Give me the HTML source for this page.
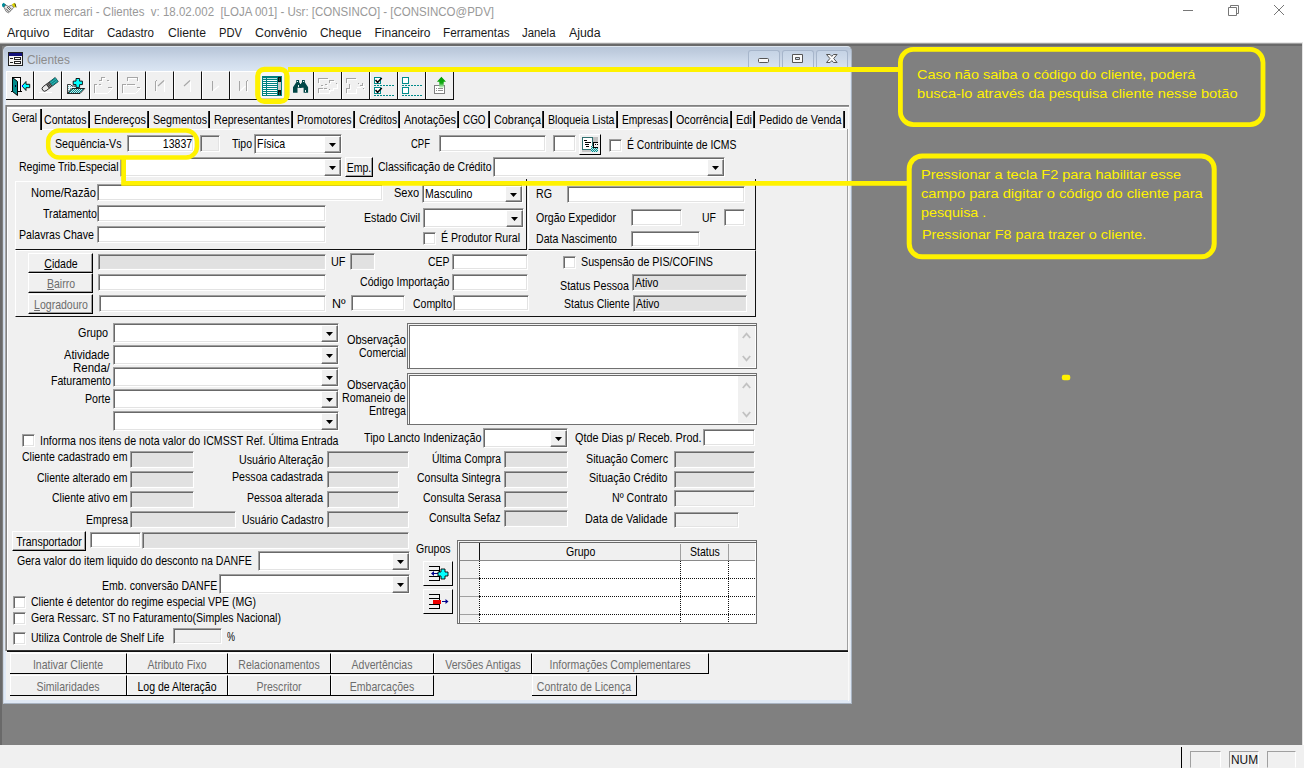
<!DOCTYPE html>
<html lang="pt-BR"><head><meta charset="utf-8"><title>acrux mercari - Clientes</title>
<style>
*{box-sizing:border-box;margin:0;padding:0}
html,body{width:1304px;height:771px;overflow:hidden;background:#fff}
body{position:relative;font:13px "Liberation Sans",sans-serif;color:#000}
div,span,i,b,svg{position:absolute}
u{text-decoration:underline}
.t{font:13px/15px "Liberation Sans",sans-serif;white-space:pre;transform:scaleX(.81);transform-origin:0 0;color:#000}
.t.g{color:#6d6d6d}
.ui{font:12px/16px "Liberation Sans",sans-serif;white-space:pre;transform-origin:0 0}
.in{background:#fff;border:1px solid;border-color:#a0a0a0 #fff #fff #a0a0a0;box-shadow:inset 1px 1px 0 #696969,inset -1px -1px 0 #e3e3e3}
.in.g{background:#e1e1e1}
.in.f{background:#f0f0f0}
.ck{background:#fff;border:1px solid;border-color:#a0a0a0 #fff #fff #a0a0a0;box-shadow:inset 1px 1px 0 #696969,inset -1px -1px 0 #e3e3e3}
.cb{right:0;top:1px;bottom:0;width:17px;background:#f0f0f0;border:1px solid;border-color:#fff #696969 #696969 #fff;box-shadow:inset -1px -1px 0 #a0a0a0}
.cb b{left:4px;top:6px;width:7px;height:4px;background:#000;clip-path:polygon(0 0,100% 0,50% 100%)}
.bt{background:#f0f0f0;border:1px solid;border-color:#fff #000 #000 #fff;box-shadow:inset -1px -1px 0 #a0a0a0;text-align:center;font:13px "Liberation Sans",sans-serif;white-space:pre;overflow:hidden}
.bt .bl{left:50%;top:1px;transform:translateX(-50%) scaleX(.81);transform-origin:50% 50%}
.bt.d{color:#6d6d6d}
.ln{background:#000}
.tb{width:28px;height:29px;border:1px solid;border-color:#fff #111 #111 #fff;background:#f0f0f0}
.in.ta{border:1px solid #707070;box-shadow:inset 1px 1px 0 #f4f4f4,inset 2px 2px 0 #696969,inset -1px -1px 0 #fff}
.bt.nb{border-left:0;box-shadow:inset 1px 0 0 #fff}
.c{font:13.5px/16px "Liberation Sans",sans-serif;white-space:pre;color:#fff200;transform-origin:0 0}
.bt.nb2{box-shadow:none}

</style></head>
<body>
<div id="titlebar" style="left:0;top:0;width:1304px;height:22px;background:#fff"></div>
<svg style="left:0;top:0" width="20" height="16" viewBox="0 0 20 16">
<path d="M2 4.2 L3.6 2.8 L5.8 4.6 L4 7.6 L2.2 6.6 Z" fill="#008b9a"/>
<path d="M16 4.6 L14.2 2.8 L11.8 4.4 L13.6 7.4 L15.8 7.2 Z" fill="#d8d000"/>
<path d="M14.8 3.4 L16.2 7.4" stroke="#222" stroke-width=".8"/>
<path d="M4 7.2 L5.6 5 L8.4 6.4 L11.6 5.2 L13.6 7.4 L11 10.6 L8.4 12.8 L6 11.4 Z" fill="#e6e6e6" stroke="#555" stroke-width=".7"/>
<path d="M7 7 L10.4 10.4 M8.6 6.4 L11.6 9.4 M6 8.6 L9 11.8 M5.2 5.2 L5.8 4.6" stroke="#333" stroke-width=".8" fill="none"/>
</svg>
<span class="ui" style="left:23px;top:4px;color:#999;transform:scaleX(.958)">acrux mercari - Clientes  v: 18.02.002  [LOJA 001] - Usr: [CONSINCO] - [CONSINCO@PDV]</span>
<svg style="left:1170px;top:0" width="134" height="22" viewBox="0 0 134 22">
<g stroke="#777" stroke-width="1" fill="none">
<path d="M13 10.5 H23"/>
<path d="M58.5 7.5 h8 v8 h-8 z M60.5 7.5 v-2 h8 v8 h-2"/>
<path d="M104 5 L114 15 M114 5 L104 15"/>
</g></svg>
<span class="ui" style="left:6.5px;top:25px;color:#1a1a1a;transform:scaleX(1.044)">Arquivo</span>
<span class="ui" style="left:63.0px;top:25px;color:#1a1a1a;transform:scaleX(0.987)">Editar</span>
<span class="ui" style="left:107.0px;top:25px;color:#1a1a1a;transform:scaleX(0.965)">Cadastro</span>
<span class="ui" style="left:168.0px;top:25px;color:#1a1a1a;transform:scaleX(1.016)">Cliente</span>
<span class="ui" style="left:218.5px;top:25px;color:#1a1a1a;transform:scaleX(0.931)">PDV</span>
<span class="ui" style="left:254.5px;top:25px;color:#1a1a1a;transform:scaleX(1.026)">Convênio</span>
<span class="ui" style="left:320.0px;top:25px;color:#1a1a1a;transform:scaleX(0.988)">Cheque</span>
<span class="ui" style="left:374.5px;top:25px;color:#1a1a1a;transform:scaleX(1.0)">Financeiro</span>
<span class="ui" style="left:443.0px;top:25px;color:#1a1a1a;transform:scaleX(0.978)">Ferramentas</span>
<span class="ui" style="left:522.0px;top:25px;color:#1a1a1a;transform:scaleX(0.946)">Janela</span>
<span class="ui" style="left:568.5px;top:25px;color:#1a1a1a;transform:scaleX(1.026)">Ajuda</span>
<div id="mdi" style="left:0;top:42px;width:1303px;height:703px;background:#808080;border-top:1px solid #e8e8e8"></div>
<div style="left:0;top:43px;width:1302px;height:1px;background:#a0a0a0"></div>
<div style="left:0;top:44px;width:1302px;height:2px;background:#696969"></div>
<div style="left:0;top:44px;width:2px;height:701px;background:#696969"></div>
<div style="left:1302px;top:43px;width:1px;height:702px;background:#e3e3e3"></div>
<div id="status" style="left:0;top:745px;width:1304px;height:23px;background:#f0f0f0"></div>
<div style="left:1181px;top:747px;width:1px;height:21px;background:#000"></div>
<div style="left:1190px;top:751px;width:31px;height:17px;border:1px solid;border-color:#a0a0a0 #fff #f0f0f0 #a0a0a0"></div>
<div style="left:1229px;top:751px;width:30px;height:17px;border:1px solid;border-color:#a0a0a0 #fff #f0f0f0 #a0a0a0"></div>
<div style="left:1267px;top:751px;width:29px;height:17px;border:1px solid;border-color:#a0a0a0 #fff #f0f0f0 #a0a0a0"></div>
<span class="ui" style="left:1230.5px;top:752px;font-size:12.5px;color:#111;transform:scaleX(.95)">NUM</span>
<div id="child" style="left:3px;top:46px;width:849px;height:658px;border-radius:5px 5px 0 0;background:linear-gradient(#b8c6d9 0,#bfccde 5px,#cdd9e9 13px,#d8e3f1 22px,#dde7f3 26px,#e0e9f5 100%);border:1px solid #ccd6e3;border-color:#dde5ee #a9b4c2 #a9b4c2 #ccd6e3"></div>
<div id="content" style="left:6px;top:71px;width:844px;height:629px;background:#f0f0f0"></div>
<svg style="left:8px;top:52px" width="15" height="14" viewBox="0 0 15 14">
<rect x="0" y="0" width="15" height="14" fill="#222"/><rect x="1" y="1" width="13" height="12" fill="#f4f4f4"/>
<rect x="1" y="1" width="13" height="3" fill="#10107a"/>
<rect x="2" y="6" width="3" height="1" fill="#222"/><rect x="2" y="10" width="3" height="1" fill="#222"/>
<rect x="6.5" y="5.5" width="6" height="2" fill="#fff" stroke="#222"/><rect x="6.5" y="9.5" width="6" height="2" fill="#fff" stroke="#222"/>
</svg>
<span class="ui" style="left:27px;top:52px;font-size:12.5px;color:#8c8c8c;transform:scaleX(.95)">Clientes</span>
<div style="left:748px;top:50px;width:32px;height:20px;border:1px solid #a7b6cb;border-bottom:0;border-radius:3px 3px 0 0;background:linear-gradient(#c5d3e5,#dbe5f2)"></div>
<div style="left:782px;top:50px;width:32px;height:20px;border:1px solid #a7b6cb;border-bottom:0;border-radius:3px 3px 0 0;background:linear-gradient(#c5d3e5,#dbe5f2)"></div>
<div style="left:816px;top:50px;width:32px;height:20px;border:1px solid #a7b6cb;border-bottom:0;border-radius:3px 3px 0 0;background:linear-gradient(#c5d3e5,#dbe5f2)"></div>
<svg style="left:748px;top:50px" width="100" height="20" viewBox="0 0 100 20">
<g fill="#fafafa" stroke="#555" stroke-width="1">
<rect x="10.5" y="8.5" width="10" height="4" rx="1"/>
<path d="M44.5 4.5 h10 v8 h-10 z M47.5 7.5 v2 h4 v-2 z" fill-rule="evenodd"/>
<path d="M78.5 4.5 h3.6 l1.7 1.9 l1.7 -1.9 h3.6 l-3.4 4 l3.4 4 h-3.6 l-1.7 -1.9 l-1.7 1.9 h-3.6 l3.4 -4 z"/>
</g></svg>
<div class="tb" style="left:6px;top:71px"></div>
<div class="tb" style="left:34px;top:71px"></div>
<div class="tb" style="left:62px;top:71px"></div>
<div class="tb" style="left:90px;top:71px"></div>
<div class="tb" style="left:118px;top:71px"></div>
<div class="tb" style="left:146px;top:71px"></div>
<div class="tb" style="left:174px;top:71px"></div>
<div class="tb" style="left:202px;top:71px"></div>
<div class="tb" style="left:230px;top:71px"></div>
<div class="tb" style="left:258px;top:71px"></div>
<div class="tb" style="left:286px;top:71px"></div>
<div class="tb" style="left:314px;top:71px"></div>
<div class="tb" style="left:342px;top:71px"></div>
<div class="tb" style="left:370px;top:71px"></div>
<div class="tb" style="left:398px;top:71px"></div>
<div class="tb" style="left:426px;top:71px"></div>
<div style="left:6px;top:99px;width:448px;height:1px;background:#111"></div>
<div style="left:260px;top:72px;width:25px;height:27px;background:#f7f7fb;box-shadow:inset -1px -1px 0 #c9c9d6"></div>
<svg id="tbicons" style="left:0;top:66px" width="460" height="40" viewBox="0 66 460 40" shape-rendering="crispEdges">
<rect x="12.5" y="77.5" width="8" height="14" fill="#fff" stroke="#000"/>
<path d="M10.5 91.5H22" stroke="#000" fill="none"/>
<path d="M12.5 77.5 L17.5 81.5 V95.5 L12.5 91.5 Z" fill="#008b8b" stroke="#000" shape-rendering="geometricPrecision"/>
<rect x="15" y="85" width="1" height="1.5" fill="#003"/>
<path d="M22 86 L26 81.5 V84.3 H29.7 V87.7 H26 V90.5 Z" fill="#00ffff" stroke="#000" stroke-width=".9" shape-rendering="geometricPrecision"/>
<rect x="21.5" y="85.2" width="1.3" height="1.6" fill="#0000ff"/>
<g shape-rendering="geometricPrecision" transform="rotate(-37 49.5 85)"><path d="M43.4 82.5 H58.5 V87.5 H43.4 A2.5 2.5 0 0 1 43.4 82.5 Z" fill="#e8e8e8" stroke="#111" stroke-width=".8"/><rect x="47" y="82.5" width="4.5" height="5" fill="#333"/><path d="M48.5 82.5v5M50 82.5v5" stroke="#bbb" stroke-width=".5"/><rect x="51.5" y="82.5" width="7" height="5" fill="#008b8b"/><path d="M52 84h6.5M52 86h6.5" stroke="#7fd0d0" stroke-width=".5"/></g>
<path d="M39 92.5H52" stroke="#fff"/>
<defs><pattern id="dz" width="2" height="2" patternUnits="userSpaceOnUse"><rect width="2" height="2" fill="#008b8b"/><rect width="1" height="1" fill="#cfeaea"/><rect x="1" y="1" width="1" height="1" fill="#cfeaea"/></pattern><pattern id="dl" width="2" height="2" patternUnits="userSpaceOnUse"><rect width="2" height="2" fill="#eef8f8"/><rect width="1" height="1" fill="#6fbcbc"/></pattern></defs>
<path d="M67.5 93.5 V84.5 H70.5 L72 86 H77 V88.5 H72 Z" fill="url(#dl)" stroke="#111" stroke-width=".8" shape-rendering="geometricPrecision"/>
<path d="M67.5 93.5 L72 88.5 H84.7 L80 93.5 Z" fill="url(#dz)" stroke="#111" stroke-width=".9" shape-rendering="geometricPrecision"/>
<path d="M76 78.5 h3.6 v2.6 h2.8 v3.5 h-2.8 v2.8 h-3.6 v-2.8 h-2.8 v-3.5 h2.8 z" fill="#00ffff" stroke="#000" stroke-width=".9" shape-rendering="geometricPrecision"/>
<path d="M94.5 92.5 V84.5 H97 M98.5 80.5 H101.5 V77.5 H105 M106.5 80.5 H108.5 M99 84.5 H101 M108 87.5 H112" transform="translate(1 1)" stroke="#fff" fill="none"/>
<path d="M94.5 92.5 V84.5 H97 M98.5 80.5 H101.5 V77.5 H105 M106.5 80.5 H108.5 M99 84.5 H101 M108 87.5 H112" stroke="#a6a6a6" fill="none"/>
<path d="M95 93.5 H107.5 L112.5 88.5" stroke="#fff" fill="none" shape-rendering="geometricPrecision"/>
<path d="M122.5 92.5 V84.5 H125.5 M127.5 80.5 V77.5 H137.5 V80.5 M127 84.5 H135 M136.5 87.5 H140" transform="translate(1 1)" stroke="#fff" fill="none"/>
<path d="M122.5 92.5 V84.5 H125.5 M127.5 80.5 V77.5 H137.5 V80.5 M127 84.5 H135 M136.5 87.5 H140" stroke="#a6a6a6" fill="none"/>
<path d="M123 93.5 H135.5 L140.5 88.5" stroke="#fff" fill="none" shape-rendering="geometricPrecision"/>
<path d="M164.5 80.5 V91.5" stroke="#fff" fill="none"/>
<path d="M155.5 80.5 V90.5 M155.5 80.5 H157" stroke="#a6a6a6" fill="none"/>
<path d="M164 80.5 L158 86" stroke="#a6a6a6" stroke-width="1.1" fill="none" shape-rendering="geometricPrecision"/>
<path d="M156.5 81.5 V91.5" stroke="#fff" fill="none" opacity=".7"/>
<path d="M190.5 80.5 V91.5" stroke="#fff" fill="none"/>
<path d="M190 80.5 L184 86" stroke="#a6a6a6" stroke-width="1.1" fill="none" shape-rendering="geometricPrecision"/>
<path d="M212.5 80.5 V90.5" stroke="#a6a6a6" fill="none"/>
<path d="M213 91 L219 86" stroke="#fff" stroke-width="1.2" fill="none" shape-rendering="geometricPrecision"/>
<path d="M239.5 80.5 V90.5 M246.5 80.5 V90.5 M246.5 80.5 H248" stroke="#a6a6a6" fill="none"/>
<path d="M240 91 L245.5 86" stroke="#fff" stroke-width="1.2" fill="none" shape-rendering="geometricPrecision"/>
<path d="M247.5 81.5 V91.5" stroke="#fff" fill="none"/>
<rect x="262" y="76" width="20" height="20" fill="#008080"/>
<rect x="263.4" y="77.6" width="2.6" height="1" fill="#bfe0e0"/><rect x="267.2" y="77.6" width="9.6" height="1" fill="#bfe0e0"/>
<rect x="263.4" y="80" width="2.6" height="1" fill="#fff"/><rect x="267.2" y="80" width="9.6" height="1" fill="#fff"/>
<rect x="263.4" y="82" width="2.6" height="1" fill="#fff"/><rect x="267.2" y="82" width="9.6" height="1" fill="#fff"/>
<rect x="263.4" y="84" width="2.6" height="1" fill="#fff"/><rect x="267.2" y="84" width="9.6" height="1" fill="#fff"/>
<rect x="263.4" y="86" width="2.6" height="1" fill="#fff"/><rect x="267.2" y="86" width="9.6" height="1" fill="#fff"/>
<rect x="263.4" y="88" width="2.6" height="1" fill="#fff"/><rect x="267.2" y="88" width="9.6" height="1" fill="#fff"/>
<rect x="263.4" y="90" width="2.6" height="1" fill="#fff"/><rect x="267.2" y="90" width="9.6" height="1" fill="#fff"/>
<rect x="263.4" y="92" width="2.6" height="1" fill="#fff"/><rect x="267.2" y="92" width="9.6" height="1" fill="#fff"/>
<rect x="263.4" y="94" width="2.6" height="1" fill="#fff"/><rect x="267.2" y="94" width="9.6" height="1" fill="#fff"/>
<rect x="278" y="77" width="3" height="18" fill="#101010"/>
<rect x="278" y="82" width="3" height="8" fill="#c8c4c4"/>
<path d="M279.5 77.5v3M279.5 91.5v3" stroke="#008080" stroke-width=".6"/>
<g fill="#004646" shape-rendering="geometricPrecision"><path d="M296.3 80 h2.8 v2.3 l1 1.2 v4.3 h-2.6 v5 h-4.5 v-5.5 l3.3 -5 z"/><path d="M302 80 h2.8 v2.3 l3.3 5 v5.5 h-4.5 v-5 h-2.6 v-4.3 l1 -1.2 z"/><rect x="299.5" y="84" width="2" height="4"/></g>
<g fill="#e8f0f0"><rect x="297.2" y="80.8" width="1" height="1"/><rect x="303" y="80.8" width="1" height="1"/><rect x="294.5" y="86" width=".8" height="2"/><rect x="294.5" y="90" width=".8" height="1.6"/><rect x="298" y="84.5" width=".7" height="2"/><rect x="302.5" y="84.5" width=".7" height="2"/><rect x="304.7" y="90" width=".8" height="1.6"/></g>
<path d="M318.5 82.5 V78.5 H328 M318.5 92.5 V88.5 H322.5 M329.5 83 V80.5 H334 M335.5 83.5 H337 M321 85.5 H323 M324.5 84.5 H326.5 M324 88.5 H326.5 M329.5 89 V91" transform="translate(1 1)" stroke="#fff" fill="none"/>
<path d="M318.5 82.5 V78.5 H328 M318.5 92.5 V88.5 H322.5 M329.5 83 V80.5 H334 M335.5 83.5 H337 M321 85.5 H323 M324.5 84.5 H326.5 M324 88.5 H326.5 M329.5 89 V91" stroke="#a6a6a6" fill="none"/>
<path d="M319.5 93.5 H329 V90.5 H333.5 V88 H337.5 V84.5" stroke="#fff" fill="none"/>
<path d="M346.5 82.5 V78.5 H356 M349.5 84 V88.5 H346.5 V92.5 M359.5 85.5 H363 M362.5 83 V86.5 M357.5 83.5 H358.5 M362.5 88 H363.5" transform="translate(1 1)" stroke="#fff" fill="none"/>
<path d="M346.5 82.5 V78.5 H356 M349.5 84 V88.5 H346.5 V92.5 M359.5 85.5 H363 M362.5 83 V86.5 M357.5 83.5 H358.5 M362.5 88 H363.5" stroke="#a6a6a6" fill="none"/>
<path d="M347.5 93.5 H356.5 V88.5 M357 88 L365 86" stroke="#fff" fill="none"/>
<rect x="374.5" y="77.5" width="6" height="6" fill="#fff" stroke="#008b8b" stroke-width="1.2"/>
<path d="M375.5 80.1 L377.6 82.3 L381.8 77.9" stroke="#000" stroke-width="1.5" fill="none" shape-rendering="geometricPrecision"/>
<path d="M374 85.5 H394" stroke="#008b8b" stroke-dasharray="2 1" fill="none"/>
<rect x="374.5" y="87.5" width="6" height="6" fill="#fff" stroke="#008b8b" stroke-width="1.2"/>
<path d="M375.5 90.1 L377.6 92.3 L381.8 87.9" stroke="#000" stroke-width="1.5" fill="none" shape-rendering="geometricPrecision"/>
<path d="M374 95.5 H394" stroke="#008b8b" stroke-dasharray="2 1" fill="none"/>
<rect x="402.7" y="77.5" width="6" height="6" fill="#fff" stroke="#008b8b" stroke-width="1.2"/>
<path d="M402.2 85.5 H422.2" stroke="#008b8b" stroke-dasharray="2 1" fill="none"/>
<rect x="402.7" y="87.5" width="6" height="6" fill="#fff" stroke="#008b8b" stroke-width="1.2"/>
<path d="M402.2 95.5 H422.2" stroke="#008b8b" stroke-dasharray="2 1" fill="none"/>
<defs><linearGradient id="ga" x1="0" y1="0" x2="0" y2="1"><stop offset="0" stop-color="#00a000"/><stop offset=".55" stop-color="#10a810"/><stop offset="1" stop-color="#e8ffe8"/></linearGradient></defs>
<rect x="434.5" y="85.5" width="10.3" height="8" fill="#fff" stroke="#808080"/>
<path d="M436 88.5h1M436 90.5h1M438 88.5h5M438 90.5h5" stroke="#909090"/>
<path d="M441.4 76.8 L446 81.8 H443.7 V88 H439.3 V81.8 H436.9 Z" fill="url(#ga)" shape-rendering="geometricPrecision"/>
</svg>
<div style="left:6px;top:105px;width:843px;height:2px;background:linear-gradient(#808080 50%,#999 50%)"></div>
<div style="left:7px;top:107px;width:841px;height:1px;background:#fff"></div>
<div style="left:5px;top:129px;width:843px;height:1px;background:#fff"></div>
<div style="left:5px;top:105px;width:2px;height:546px;background:linear-gradient(90deg,#a8a8a8 50%,#808080 50%)"></div>
<div style="left:7px;top:109px;width:1px;height:542px;background:#fff"></div>
<div style="left:847px;top:129px;width:1px;height:522px;background:#a0a0a0"></div>
<div style="left:848px;top:107px;width:1px;height:594px;background:#fafafa"></div>
<div style="left:8px;top:108px;width:32px;height:23px;background:#f0f0f0;border-top:1px solid #fff"></div>
<div style="left:40px;top:109px;width:2px;height:21px;background:linear-gradient(90deg,#333 50%,#000 50%)"></div>
<span class="t" style="top:110px;left:11.5px;transform:scaleX(0.7862);">Geral</span>
<span class="t" style="top:112px;left:44.0px;transform:scaleX(0.8166);">Contatos</span>
<div style="left:88px;top:111px;width:2px;height:17px;background:linear-gradient(90deg,#333 50%,#000 50%)"></div>
<span class="t" style="top:112px;left:93.5px;transform:scaleX(0.8366);">Endereços</span>
<div style="left:147px;top:111px;width:2px;height:17px;background:linear-gradient(90deg,#333 50%,#000 50%)"></div>
<span class="t" style="top:112px;left:152.5px;transform:scaleX(0.8211);">Segmentos</span>
<div style="left:208px;top:111px;width:2px;height:17px;background:linear-gradient(90deg,#333 50%,#000 50%)"></div>
<span class="t" style="top:112px;left:214.0px;transform:scaleX(0.8226);">Representantes</span>
<div style="left:291px;top:111px;width:2px;height:17px;background:linear-gradient(90deg,#333 50%,#000 50%)"></div>
<span class="t" style="top:112px;left:296.5px;transform:scaleX(0.811);">Promotores</span>
<div style="left:352.5px;top:111px;width:2px;height:17px;background:linear-gradient(90deg,#333 50%,#000 50%)"></div>
<span class="t" style="top:112px;left:358.5px;transform:scaleX(0.7848);">Créditos</span>
<div style="left:398px;top:111px;width:2px;height:17px;background:linear-gradient(90deg,#333 50%,#000 50%)"></div>
<span class="t" style="top:112px;left:403.5px;transform:scaleX(0.8464);">Anotações</span>
<div style="left:457px;top:111px;width:2px;height:17px;background:linear-gradient(90deg,#333 50%,#000 50%)"></div>
<span class="t" style="top:112px;left:463.0px;transform:scaleX(0.7595);">CGO</span>
<div style="left:488px;top:111px;width:2px;height:17px;background:linear-gradient(90deg,#333 50%,#000 50%)"></div>
<span class="t" style="top:112px;left:493.5px;transform:scaleX(0.8337);">Cobrança</span>
<div style="left:541.5px;top:111px;width:2px;height:17px;background:linear-gradient(90deg,#333 50%,#000 50%)"></div>
<span class="t" style="top:112px;left:547.5px;transform:scaleX(0.8142);">Bloqueia Lista</span>
<div style="left:616px;top:111px;width:2px;height:17px;background:linear-gradient(90deg,#333 50%,#000 50%)"></div>
<span class="t" style="top:112px;left:622.0px;transform:scaleX(0.7859);">Empresas</span>
<div style="left:669.5px;top:111px;width:2px;height:17px;background:linear-gradient(90deg,#333 50%,#000 50%)"></div>
<span class="t" style="top:112px;left:675.5px;transform:scaleX(0.8258);">Ocorrência</span>
<div style="left:729.5px;top:111px;width:2px;height:17px;background:linear-gradient(90deg,#333 50%,#000 50%)"></div>
<span class="t" style="top:112px;left:735.5px;transform:scaleX(0.8512);">Edi</span>
<div style="left:752.5px;top:111px;width:2px;height:17px;background:linear-gradient(90deg,#333 50%,#000 50%)"></div>
<span class="t" style="top:112px;left:758.5px;transform:scaleX(0.8329);">Pedido de Venda</span>
<div style="left:842.5px;top:111px;width:2px;height:17px;background:linear-gradient(90deg,#333 50%,#000 50%)"></div>
<span class="t" style="top:136px;left:55.0px;transform:scaleX(0.8215);">Sequência-Vs</span>
<div class="in" style="left:127px;top:135px;width:67px;height:17px;"><span class="t" style="right:1px;top:0px;transform-origin:100% 0">13837</span></div>
<div class="in f" style="left:200px;top:135px;width:20px;height:17px;"></div>
<span class="t" style="top:136px;left:231.5px;transform:scaleX(0.806);">Tipo</span>
<div class="in" style="left:254px;top:134px;width:88px;height:20px;"><span class="t" style="left:2px;top:1px">Física</span><i class="cb"><b></b></i></div>
<span class="t" style="top:136px;left:410.5px;transform:scaleX(0.7308);">CPF</span>
<div class="in" style="left:439px;top:135px;width:107px;height:17px;"></div>
<div class="in" style="left:553px;top:135px;width:23px;height:17px;"></div>
<div class="bt nb2" style="left:579px;top:134px;width:22px;height:21px"></div>
<svg style="left:580px;top:135px" width="20" height="19" viewBox="580 135 20 19" shape-rendering="crispEdges">
<defs><pattern id="dz2" width="2" height="2" patternUnits="userSpaceOnUse"><rect width="2" height="2" fill="#008b8b"/><rect width="1" height="1" fill="#bfe6e6"/><rect x="1" y="1" width="1" height="1" fill="#bfe6e6"/></pattern></defs>
<rect x="593" y="137" width="5" height="5" fill="#c0c0c0"/><rect x="582" y="150" width="9" height="2" fill="#c8c8c8"/>
<rect x="582.5" y="137.5" width="10" height="12" fill="#fff" stroke="#2f6f6f" stroke-width="1.2"/>
<path d="M584 140.5h3M585 142.5h6M585 144.5h4M586 146.5h3" stroke="#000" fill="none"/>
<path d="M593 142.5h5M593 147.5h5M593.5 142v6M595 144.5h3" stroke="#000" fill="none"/>
<rect x="596" y="144" width="1" height="1" fill="#f0f0f0"/>
<path d="M590.5 152 V147 L592 145.5 H593 V148 H598 V152 Z" fill="url(#dz2)"/>
</svg>
<div class="ck" style="left:609px;top:139px;width:13px;height:13px;"></div>
<span class="t" style="top:136.5px;left:627.0px;transform:scaleX(0.8017);">É Contribuinte de ICMS</span>
<span class="t" style="top:159px;left:18.5px;transform:scaleX(0.8101);">Regime Trib.Especial</span>
<div class="in" style="left:120px;top:157px;width:222px;height:20px;"><i class="cb"><b></b></i></div>
<div class="bt " style="left:345px;top:157px;width:28px;height:20px;line-height:18px"><span class="bl">Emp.</span></div>
<span class="t" style="top:159px;left:378.0px;transform:scaleX(0.8096);">Classificação de Crédito</span>
<div class="in" style="left:493px;top:157px;width:232px;height:20px;"><i class="cb"><b></b></i></div>
<div style="left:15px;top:181px;width:512px;height:69px;border:1px solid;border-color:#fff #111 #111 #fff"></div>
<div style="left:526px;top:179px;width:1px;height:3px;background:#111"></div>
<div style="left:755px;top:179px;width:1px;height:3px;background:#111"></div>
<div style="left:528px;top:181px;width:228px;height:69px;border:1px solid;border-color:#fff #111 #111 #fff"></div>
<div style="left:15px;top:250px;width:741px;height:67px;border:1px solid;border-color:#fff #111 #111 #fff"></div>
<span class="t" style="top:185px;left:30.5px;transform:scaleX(0.8567);">Nome/Razão</span>
<div class="in" style="left:97px;top:184px;width:286px;height:17px;"></div>
<span class="t" style="top:205.5px;left:42.5px;transform:scaleX(0.8182);">Tratamento</span>
<div class="in" style="left:97px;top:205px;width:229px;height:17px;"></div>
<span class="t" style="top:226.5px;left:18.5px;transform:scaleX(0.8172);">Palavras Chave</span>
<div class="in" style="left:97px;top:226px;width:229px;height:17px;"></div>
<span class="t" style="top:185px;left:393.5px;transform:scaleX(0.8502);">Sexo</span>
<div class="in" style="left:422px;top:184px;width:101px;height:19px;"><span class="t" style="left:2px;top:1px">Masculino</span><i class="cb"><b></b></i></div>
<span class="t" style="top:209.5px;left:363.5px;transform:scaleX(0.8158);">Estado Civil</span>
<div class="in" style="left:423px;top:208px;width:101px;height:20px;"><i class="cb"><b></b></i></div>
<div class="ck" style="left:423px;top:232px;width:13px;height:13px;"></div>
<span class="t" style="top:229.5px;left:441.0px;transform:scaleX(0.8159);">É Produtor Rural</span>
<span class="t" style="top:185.5px;left:535.5px;transform:scaleX(0.8205);">RG</span>
<div class="in" style="left:567px;top:186px;width:178px;height:17px;"></div>
<span class="t" style="top:209.5px;left:535.5px;transform:scaleX(0.814);">Orgão Expedidor</span>
<div class="in" style="left:631px;top:209px;width:51px;height:17px;"></div>
<span class="t" style="top:209.5px;left:702.0px;transform:scaleX(0.8072);">UF</span>
<div class="in" style="left:724px;top:209px;width:21px;height:17px;"></div>
<span class="t" style="top:230.5px;left:535.5px;transform:scaleX(0.8123);">Data Nascimento</span>
<div class="in" style="left:631px;top:231px;width:69px;height:16px;"></div>
<div class="bt " style="left:28px;top:253px;width:65px;height:20px;line-height:18px"><span class="bl"><u>C</u>idade</span></div>
<div class="bt d" style="left:28px;top:273px;width:65px;height:20px;line-height:18px"><span class="bl"><u>B</u>airro</span></div>
<div class="bt d" style="left:28px;top:294px;width:65px;height:20px;line-height:18px"><span class="bl"><u>L</u>ogradouro</span></div>
<div class="in g" style="left:98px;top:254px;width:228px;height:16px;"></div>
<div class="in" style="left:98px;top:274px;width:228px;height:17px;"></div>
<div class="in" style="left:99px;top:295px;width:227px;height:17px;"></div>
<span class="t" style="top:254px;left:331.0px;transform:scaleX(0.836);">UF</span>
<div class="in g" style="left:350px;top:253px;width:25px;height:17px;"></div>
<span class="t" style="top:254px;left:428.0px;transform:scaleX(0.8042);">CEP</span>
<div class="in" style="left:452px;top:254px;width:76px;height:16px;"></div>
<span class="t" style="top:274px;left:360.0px;transform:scaleX(0.8148);">Código Importação</span>
<div class="in" style="left:452px;top:274px;width:76px;height:17px;"></div>
<span class="t" style="top:295.5px;left:332.0px;transform:scaleX(0.9547);">Nº</span>
<div class="in" style="left:351px;top:295px;width:54px;height:16px;"></div>
<span class="t" style="top:295.5px;left:412.5px;transform:scaleX(0.8054);">Complto</span>
<div class="in" style="left:453px;top:295px;width:76px;height:16px;"></div>
<div class="ck" style="left:563px;top:256px;width:13px;height:13px;"></div>
<span class="t" style="top:253.5px;left:580.5px;transform:scaleX(0.8228);">Suspensão de PIS/COFINS</span>
<span class="t" style="top:278px;left:559.5px;transform:scaleX(0.8231);">Status Pessoa</span>
<div class="in g" style="left:632px;top:274px;width:115px;height:17px;"><span class="t" style="left:2px;top:0px">Ativo</span></div>
<span class="t" style="top:295.5px;left:564.0px;transform:scaleX(0.8093);">Status Cliente</span>
<div class="in g" style="left:633px;top:295px;width:114px;height:17px;"><span class="t" style="left:2px;top:0px">Ativo</span></div>
<span class="t" style="top:325px;left:77.5px;transform:scaleX(0.8301);">Grupo</span>
<div class="in" style="left:113px;top:323px;width:226px;height:20px;"><i class="cb"><b></b></i></div>
<span class="t" style="top:347px;left:64.0px;transform:scaleX(0.8507);">Atividade</span>
<div class="in" style="left:113px;top:345px;width:226px;height:20px;"><i class="cb"><b></b></i></div>
<span class="t" style="top:360px;left:72.5px;transform:scaleX(0.8826);">Renda/</span>
<span class="t" style="top:373px;left:50.5px;transform:scaleX(0.8141);">Faturamento</span>
<div class="in" style="left:113px;top:367px;width:226px;height:20px;"><i class="cb"><b></b></i></div>
<span class="t" style="top:390.5px;left:85.0px;transform:scaleX(0.8205);">Porte</span>
<div class="in" style="left:113px;top:389px;width:226px;height:20px;"><i class="cb"><b></b></i></div>
<div class="in" style="left:113px;top:411px;width:226px;height:20px;"><i class="cb"><b></b></i></div>
<span class="t" style="top:331.5px;left:347.0px;transform:scaleX(0.8374);">Observação</span>
<span class="t" style="top:344.5px;left:358.5px;transform:scaleX(0.8066);">Comercial</span>
<span class="t" style="top:376.5px;left:347.0px;transform:scaleX(0.8374);">Observação</span>
<span class="t" style="top:389.5px;left:342.0px;transform:scaleX(0.8212);">Romaneio de</span>
<span class="t" style="top:403px;left:368.5px;transform:scaleX(0.8123);">Entrega</span>
<div class="in ta" style="left:407px;top:323px;width:350px;height:46px;"><div style="right:1px;top:2px;bottom:1px;width:17px;background:#f0f0f0"><svg style="left:4px;top:6px" width="9" height="7"><path d="M0.8 6 L4.5 1.6 L8.2 6" fill="none" stroke="#c2c2c2" stroke-width="1.8"/></svg><svg style="left:4px;bottom:5px" width="9" height="7"><path d="M0.8 1 L4.5 5.4 L8.2 1" fill="none" stroke="#c2c2c2" stroke-width="1.8"/></svg></div></div>
<div class="in ta" style="left:407px;top:373px;width:350px;height:52px;"><div style="right:1px;top:2px;bottom:1px;width:17px;background:#f0f0f0"><svg style="left:4px;top:6px" width="9" height="7"><path d="M0.8 6 L4.5 1.6 L8.2 6" fill="none" stroke="#c2c2c2" stroke-width="1.8"/></svg><svg style="left:4px;bottom:5px" width="9" height="7"><path d="M0.8 1 L4.5 5.4 L8.2 1" fill="none" stroke="#c2c2c2" stroke-width="1.8"/></svg></div></div>
<div class="ck" style="left:22px;top:434px;width:13px;height:13px;"></div>
<span class="t" style="top:433px;left:40.0px;transform:scaleX(0.8153);">Informa nos itens de nota valor do ICMSST Ref. Última Entrada</span>
<span class="t" style="top:430px;left:363.5px;transform:scaleX(0.8323);">Tipo Lancto Indenização</span>
<div class="in" style="left:483px;top:428px;width:85px;height:20px;"><i class="cb"><b></b></i></div>
<span class="t" style="top:430px;left:575.0px;transform:scaleX(0.8336);">Qtde Dias p/ Receb. Prod.</span>
<div class="in" style="left:703px;top:429px;width:52px;height:17px;"></div>
<span class="t" style="top:448.5px;left:22.0px;transform:scaleX(0.8111);">Cliente cadastrado em</span>
<div class="in g" style="left:130px;top:451px;width:64px;height:17px;"></div>
<span class="t" style="top:469.5px;left:37.0px;transform:scaleX(0.8028);">Cliente alterado em</span>
<div class="in g" style="left:130px;top:471px;width:64px;height:17px;"></div>
<span class="t" style="top:489.5px;left:52.0px;transform:scaleX(0.8099);">Cliente ativo em</span>
<div class="in g" style="left:130px;top:491px;width:64px;height:17px;"></div>
<span class="t" style="top:511.5px;left:85.5px;transform:scaleX(0.8072);">Empresa</span>
<div class="in g" style="left:130px;top:511px;width:106px;height:17px;"></div>
<span class="t" style="top:452px;left:238.5px;transform:scaleX(0.8234);">Usuário Alteração</span>
<div class="in g" style="left:327px;top:451px;width:82px;height:17px;"></div>
<span class="t" style="top:469px;left:232.0px;transform:scaleX(0.8176);">Pessoa cadastrada</span>
<div class="in g" style="left:327px;top:471px;width:72px;height:17px;"></div>
<span class="t" style="top:489.5px;left:247.0px;transform:scaleX(0.8089);">Pessoa alterada</span>
<div class="in g" style="left:327px;top:491px;width:72px;height:17px;"></div>
<span class="t" style="top:511.5px;left:241.5px;transform:scaleX(0.8057);">Usuário Cadastro</span>
<div class="in g" style="left:327px;top:511px;width:82px;height:17px;"></div>
<span class="t" style="top:451px;left:431.5px;transform:scaleX(0.796);">Última Compra</span>
<div class="in g" style="left:504px;top:451px;width:64px;height:17px;"></div>
<span class="t" style="top:470px;left:417.0px;transform:scaleX(0.808);">Consulta Sintegra</span>
<div class="in g" style="left:504px;top:471px;width:64px;height:17px;"></div>
<span class="t" style="top:490px;left:422.5px;transform:scaleX(0.8114);">Consulta Serasa</span>
<div class="in g" style="left:504px;top:491px;width:64px;height:17px;"></div>
<span class="t" style="top:510px;left:429.0px;transform:scaleX(0.8109);">Consulta Sefaz</span>
<div class="in g" style="left:504px;top:510px;width:64px;height:17px;"></div>
<span class="t" style="top:450.5px;left:585.5px;transform:scaleX(0.8223);">Situação Comerc</span>
<div class="in g" style="left:674px;top:451px;width:81px;height:17px;"></div>
<span class="t" style="top:470px;left:589.0px;transform:scaleX(0.8166);">Situação Crédito</span>
<div class="in g" style="left:674px;top:471px;width:81px;height:17px;"></div>
<span class="t" style="top:490px;left:612.0px;transform:scaleX(0.8209);">Nº Contrato</span>
<div class="in f" style="left:674px;top:490px;width:81px;height:17px;"></div>
<span class="t" style="top:511px;left:585.0px;transform:scaleX(0.8352);">Data de Validade</span>
<div class="in f" style="left:674px;top:512px;width:65px;height:16px;"></div>
<div class="bt " style="left:12px;top:531px;width:74px;height:20px;line-height:18px"><span class="bl">Transportador</span></div>
<div class="in" style="left:90px;top:532px;width:51px;height:16px;"></div>
<div class="in g" style="left:142px;top:532px;width:267px;height:17px;"></div>
<span class="t" style="top:553px;left:16.5px;transform:scaleX(0.8142);">Gera valor do item liquido do desconto na DANFE</span>
<div class="in" style="left:258px;top:551px;width:152px;height:20px;"><i class="cb"><b></b></i></div>
<span class="t" style="top:577.5px;left:102.0px;transform:scaleX(0.8139);">Emb. conversão DANFE</span>
<div class="in" style="left:219px;top:574px;width:191px;height:20px;"><i class="cb"><b></b></i></div>
<div class="ck" style="left:13px;top:596px;width:13px;height:13px;"></div>
<span class="t" style="top:593.5px;left:30.5px;transform:scaleX(0.8088);">Cliente é detentor do regime especial VPE (MG)</span>
<div class="ck" style="left:13px;top:612px;width:13px;height:13px;"></div>
<span class="t" style="top:609.5px;left:30.5px;transform:scaleX(0.8109);">Gera Ressarc. ST no Faturamento(Simples Nacional)</span>
<div class="ck" style="left:13px;top:632px;width:13px;height:13px;"></div>
<span class="t" style="top:629.5px;left:30.5px;transform:scaleX(0.8108);">Utiliza Controle de Shelf Life</span>
<div class="in f" style="left:173px;top:628px;width:49px;height:16px;"></div>
<span class="t" style="top:629px;left:226.5px;transform:scaleX(0.6919);">%</span>
<span class="t" style="top:541px;left:416.0px;transform:scaleX(0.8091);">Grupos</span>
<div class="bt nb2" style="left:423px;top:561px;width:30px;height:25px"></div>
<div class="bt nb2" style="left:423px;top:589px;width:30px;height:25px"></div>
<svg style="left:423px;top:561px" width="30" height="53" viewBox="423 561 30 53" shape-rendering="crispEdges">
<path d="M429 566.5H440M429 570.5H440M429 576.5H440M429 580.5H440M439.5 566V581" stroke="#000" fill="none"/>
<rect x="431" y="571" width="8" height="5" fill="#f0f0f0"/>
<path d="M433 573.5H438" stroke="#00008b" fill="none"/><path d="M431 573.5L434 571V576Z" fill="#00008b" shape-rendering="geometricPrecision"/>
<path d="M441 569h4v3h3v4h-3v3h-4v-3h-3v-4h3z" fill="#00ffff" stroke="#000" stroke-width=".9" shape-rendering="geometricPrecision"/>
<path d="M429 594.5H440M429 598.5H440M429 604.5H440M429 608.5H440M439.5 594V609" stroke="#000" fill="none"/>
<rect x="433" y="599.5" width="8" height="4.5" fill="#f00000"/>
<path d="M442 601.5H446" stroke="#00008b" fill="none"/><path d="M448.5 601.5L445.5 599V604Z" fill="#00008b" shape-rendering="geometricPrecision"/>
</svg>
<div class="in ta" style="left:457px;top:540px;width:300px;height:84px"></div>
<div style="left:460px;top:543px;width:295px;height:18px;background:#f0f0f0;border-bottom:1px solid #8a8a8a"></div>
<div style="left:460px;top:561px;width:19px;height:61px;background:#f0f0f0"></div>
<div style="left:479px;top:543px;width:1px;height:17px;background:#111"></div>
<div style="left:460px;top:578px;width:19px;height:1px;background:#a0a0a0"></div>
<div style="left:460px;top:596px;width:19px;height:1px;background:#a0a0a0"></div>
<div style="left:460px;top:614px;width:19px;height:1px;background:#a0a0a0"></div>
<div style="left:479px;top:578px;width:276px;height:0;border-top:1px dotted #111"></div>
<div style="left:479px;top:596px;width:276px;height:0;border-top:1px dotted #111"></div>
<div style="left:479px;top:614px;width:276px;height:0;border-top:1px dotted #111"></div>
<div style="left:479px;top:561px;width:0;height:61px;border-left:1px dotted #111"></div>
<div style="left:680px;top:561px;width:0;height:61px;border-left:1px dotted #111"></div>
<div style="left:728px;top:561px;width:0;height:61px;border-left:1px dotted #111"></div>
<div style="left:680px;top:544px;width:1px;height:16px;background:#a0a0a0"></div>
<div style="left:728px;top:544px;width:1px;height:16px;background:#a0a0a0"></div>
<span class="t" style="top:544px;left:565.5px;">Grupo</span>
<span class="t" style="top:544px;left:690px;">Status</span>
<div style="left:7px;top:650px;width:841px;height:2px;background:linear-gradient(#333 50%,#111 50%)"></div>
<div style="left:7px;top:652px;width:841px;height:1px;background:#fafafa"></div>
<div class="bt d nb" style="left:10px;top:653px;width:117px;height:21px;line-height:19px"><span class="bl">Inativar Cliente</span></div>
<div class="bt d nb" style="left:127px;top:653px;width:101px;height:21px;line-height:19px"><span class="bl">Atributo Fixo</span></div>
<div class="bt d nb" style="left:228px;top:653px;width:103px;height:21px;line-height:19px"><span class="bl">Relacionamentos</span></div>
<div class="bt d nb" style="left:331px;top:653px;width:103px;height:21px;line-height:19px"><span class="bl">Advertências</span></div>
<div class="bt d nb" style="left:434px;top:653px;width:98px;height:21px;line-height:19px"><span class="bl">Versões Antigas</span></div>
<div class="bt d nb" style="left:532px;top:653px;width:177px;height:21px;line-height:19px"><span class="bl">Informações Complementares</span></div>
<div class="bt d nb" style="left:10px;top:675px;width:117px;height:21px;line-height:19px"><span class="bl">Similaridades</span></div>
<div class="bt  nb" style="left:127px;top:675px;width:101px;height:21px;line-height:19px"><span class="bl">Log de Alteração</span></div>
<div class="bt d nb" style="left:228px;top:675px;width:103px;height:21px;line-height:19px"><span class="bl">Prescritor</span></div>
<div class="bt d nb" style="left:331px;top:675px;width:103px;height:21px;line-height:19px"><span class="bl">Embarcações</span></div>
<div class="bt d nb" style="left:532px;top:675px;width:105px;height:21px;line-height:19px"><span class="bl">Contrato de Licença</span></div>
<svg id="anno" style="left:0;top:0" width="1304" height="771" viewBox="0 0 1304 771" fill="none" stroke="#fff200">
<rect x="257.75" y="69.4" width="29.3" height="32" rx="6.5" stroke-width="5.2"/>
<path d="M288 69.5 H900" stroke-width="5"/>
<rect x="900.4" y="49.4" width="362.6" height="75.2" rx="13" stroke-width="4.8"/>
<rect x="48.2" y="130.5" width="148.8" height="27" rx="11" stroke-width="4.5"/>
<path d="M123.6 158 V183.3 H909" stroke-width="4.8"/>
<rect x="909.2" y="156" width="305" height="100.8" rx="13" stroke-width="5"/>
<rect x="1061.8" y="374.7" width="8.5" height="5.6" rx="2.2" fill="#fff200" stroke="none"/>
</svg>
<span class="c" style="left:917px;top:67.0px;transform:scaleX(1.072)">Caso não saiba o código do cliente, poderá</span>
<span class="c" style="left:917px;top:85.8px;transform:scaleX(1.084)">busca-lo através da pesquisa cliente nesse botão</span>
<span class="c" style="left:920.7px;top:166.5px;transform:scaleX(1.076)">Pressionar a tecla F2 para habilitar esse</span>
<span class="c" style="left:920.7px;top:185.8px;transform:scaleX(1.088)">campo para digitar o código do cliente para</span>
<span class="c" style="left:920.7px;top:204.5px;transform:scaleX(1.06)">pesquisa .</span>
<span class="c" style="left:922.2px;top:226.5px;transform:scaleX(1.064)">Pressionar F8 para trazer o cliente.</span>
</body></html>
